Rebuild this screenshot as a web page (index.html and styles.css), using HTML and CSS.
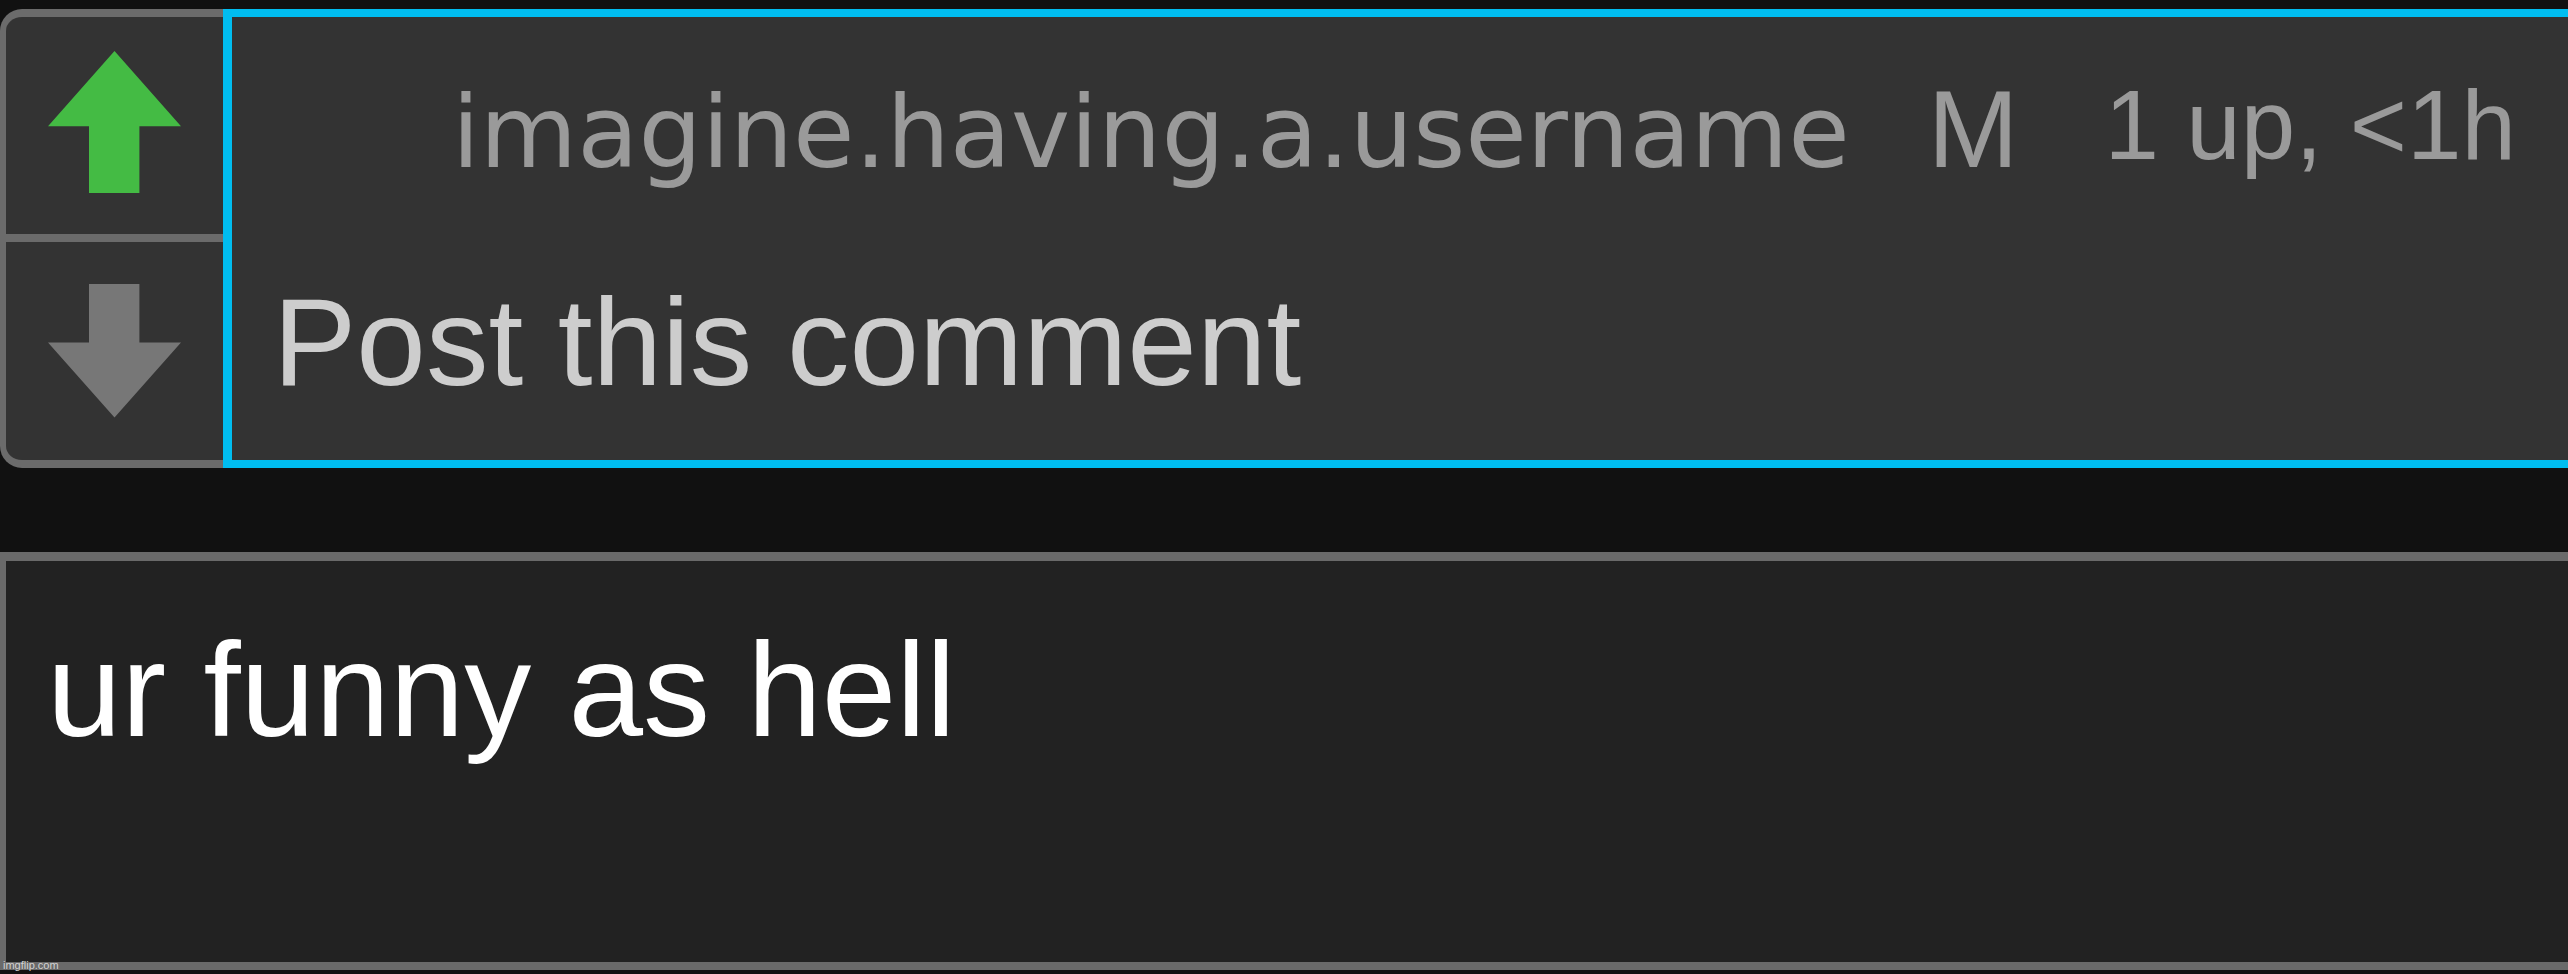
FILE: index.html
```html
<!DOCTYPE html>
<html lang="en">
<head>
  <meta charset="UTF-8" />
  <meta name="viewport" content="width=device-width, initial-scale=1.0" />
  <title>Comment</title>
  <link rel="stylesheet" href="styles.css">
</head>
<body>

<div class="page">
  <div class="comment">
    <div class="votes">
      <div class="vote up">
        <svg width="133" height="142" viewBox="0 0 133 142">
          <path d="M66.5 0 L133 75.3 H91.4 V142 H41 V75.3 H0 Z" fill="#44bb44" />
        </svg>
      </div>
      <div class="vote down">
        <svg width="133" height="134" viewBox="0 0 133 134">
          <path d="M41 0 H91.4 V58.6 H133 L66.5 133.6 L0 58.6 H41 Z" fill="#777777" />
        </svg>
      </div>
    </div>
    <div class="comment-body">
      <div class="meta">
        <span class="user">imagine.having.a.username</span>
        <span class="badge">M</span>
        <span class="age">1 up, &lt;1h</span>
      </div>
      <div class="comment-text">Post this comment</div>
    </div>
  </div>

  <div class="reply">ur funny as hell</div>

  <div class="watermark">imgflip.com</div>
</div>

</body>
</html>
```

FILE: styles.css
```css
body {
  margin: 0;
  padding: 0;
  background: #111111;
  font-family: 'Liberation Sans', Arial, sans-serif;
  overflow: hidden;
}

.page {
  position: relative;
  height: 974px;
  padding-top: 9px;
  box-sizing: border-box;
}

.comment {
  display: flex;
  height: 459px;
}

.votes {
  display: flex;
  flex-direction: column;
  width: 223px;
  flex-shrink: 0;
  box-sizing: border-box;
  border: 8px solid #6b6b6b;
  border-left-width: 6px;
  border-right: 0;
  border-radius: 22px 0 0 22px;
  background: #333333;
}

.vote {
  display: flex;
  justify-content: center;
  align-items: center;
}

.vote.up {
  height: 209px;
  padding-bottom: 8px;
}

.vote.down {
  flex: 1;
  border-top: 8px solid #6b6b6b;
}

.comment-body {
  flex: 1;
  box-sizing: border-box;
  border: 8px solid #00bdf0;
  border-left-width: 9px;
  border-right: 0;
  background: #333333;
}

.meta {
  display: flex;
  align-items: flex-start;
  padding-top: 58px;
  padding-left: 220px;
  color: #9a9a9a;
  white-space: nowrap;
}

.user {
  font-family: 'DejaVu Sans', Verdana, sans-serif;
  font-size: 100px;
  line-height: 100px;
  margin-top: 8px;
}

.badge {
  font-size: 109px;
  line-height: 109px;
  margin-left: 78px;
}

.age {
  font-size: 98px;
  line-height: 98px;
  margin-top: 1px;
  margin-left: 86px;
}

.comment-text {
  margin-top: 95px;
  padding-left: 41px;
  font-size: 125px;
  line-height: 125px;
  color: #cdcdcd;
  white-space: nowrap;
}

.reply {
  margin-top: 84px;
  height: 418px;
  box-sizing: border-box;
  border: 8px solid #6a6a6a;
  border-top-width: 9px;
  border-left-width: 6px;
  border-right: 0;
  background: #222222;
  padding: 62px 0 0 41px;
  font-size: 134px;
  line-height: 134px;
  color: #ffffff;
  white-space: nowrap;
}

.watermark {
  position: absolute;
  left: 3px;
  bottom: 3px;
  font-size: 11px;
  line-height: 11px;
  color: #d2d2d2;
}
```
